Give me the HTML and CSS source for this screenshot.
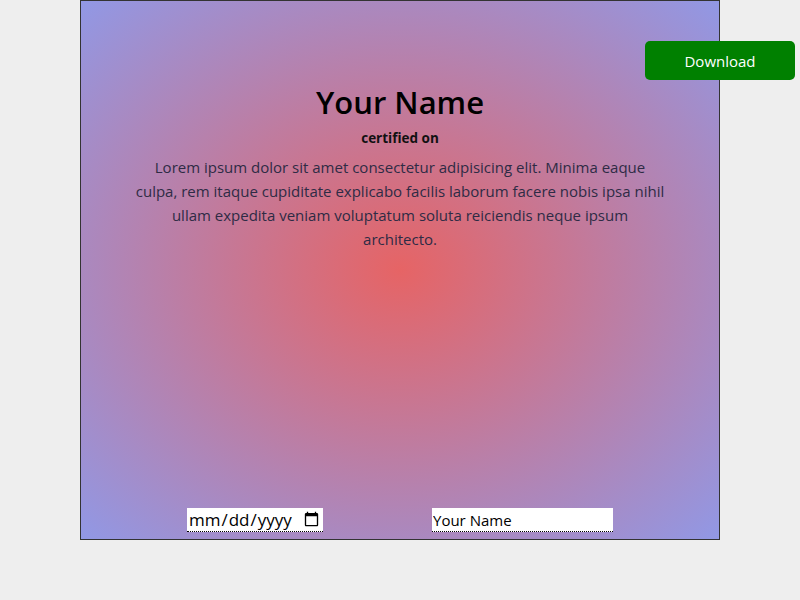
FILE: index.html
```html
<!DOCTYPE html>
<html>
<head>
<meta charset="utf-8">
<link rel="stylesheet" href="styles.css">
</head>
<body>
<div class="certificate">
  <div class="content">
    <h1 class="title">Your Name</h1>
    <div class="subtitle">certified on</div>
    <p class="text">Lorem ipsum dolor sit amet consectetur adipisicing elit. Minima eaque culpa, rem itaque cupiditate explicabo facilis laborum facere nobis ipsa nihil ullam expedita veniam voluptatum soluta reiciendis neque ipsum architecto.</p>
  </div>
  <div class="footer">
    <input class="field date" type="date">
    <input class="field name" type="text" value="Your Name">
  </div>
</div>
<button class="download">Download</button>
</body>
</html>
```
FILE: styles.css
```css
html, body {
  margin: 0;
  padding: 0;
  background: #eeeeee;
  font-family: "Open Sans", "Noto Sans", sans-serif;
}
.certificate {
  box-sizing: border-box;
  width: 640px;
  height: 540px;
  margin: 0 auto;
  border: 1px solid #333;
  background: radial-gradient(#e66465, #9198e5);
  display: flex;
  flex-direction: column;
}
.content {
  padding: 81px 53px 0;
  text-align: center;
}
.title {
  margin: 0;
  font-size: 31px;
  font-weight: 600;
  line-height: 40px;
  color: #000;
}
.subtitle {
  margin-top: 6px;
  font-size: 13.5px;
  font-weight: 700;
  line-height: 20px;
  color: #111;
}
.text {
  margin: 7px 0 0;
  font-size: 15px;
  line-height: 24px;
  color: #2e2b45;
}
.footer {
  margin-top: auto;
  padding: 0 0 7px 106px;
  display: flex;
  align-items: center;
  gap: 109px;
}
.field {
  box-sizing: border-box;
  height: 24px;
  border: none;
  border-bottom: 1px dotted #000;
  background: #fff;
  font-family: "Open Sans", "Noto Sans", sans-serif;
  font-size: 15px;
  padding: 0 1px;
  color: #000;
  outline: none;
}
.date {
  width: 136px;
  font-size: 17px;
}
.name {
  width: 181px;
}
.download {
  position: absolute;
  top: 41px;
  right: 5px;
  width: 150px;
  height: 39px;
  border: none;
  border-radius: 5px;
  background: #008000;
  color: #fff;
  font-family: "Open Sans", "Noto Sans", sans-serif;
  font-size: 15px;
}
```
